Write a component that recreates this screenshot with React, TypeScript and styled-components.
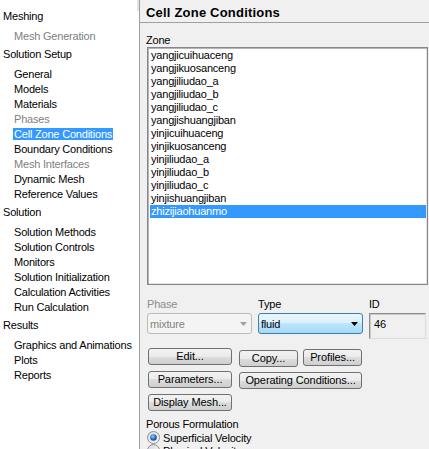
import React from "react";
import styled, { createGlobalStyle, css } from "styled-components";

const Global = createGlobalStyle`
  html, body { margin: 0; padding: 0; overflow: hidden; background: #f0f0f0; }
  * { box-sizing: border-box; }
`;

const Root = styled.div`
  display: flex;
  width: 429px;
  height: 449px;
  overflow: hidden;
  font-family: "Liberation Sans", Arial, sans-serif;
  font-size: 11px;
  letter-spacing: -0.2px;
  color: #000;
`;

const Nav = styled.nav`
  flex: none;
  width: 137px;
  background: #fff;
  padding-top: 9px;
  display: flex;
  flex-direction: column;
`;

const ScrollEdge = styled.div`
  flex: none;
  width: 2px;
  background: #fff;
  display: flex;
  flex-direction: column;
`;

const ScrollThumb = styled.div`
  height: 11px;
  background: #dfe3ee;
`;

const Group = styled.div`
  display: flex;
  flex-direction: column;
  margin-bottom: 4px;
`;

const GroupTitle = styled.div`
  height: 15px;
  line-height: 15px;
  padding-left: 3px;
  margin-bottom: 4px;
  white-space: nowrap;
`;

const NavItem = styled.div<{ $disabled?: boolean }>`
  height: 15px;
  padding-left: 13px;
  display: flex;
  align-items: center;
  white-space: nowrap;
  color: ${(p) => (p.$disabled ? "#808080" : "#000")};
`;

const NavLabel = styled.span<{ $selected?: boolean }>`
  display: inline-block;
  line-height: 12px;
  padding: 0 1px;
  ${(p) =>
    p.$selected &&
    css`
      background: #3399ff;
      color: #fff;
    `}
`;

const Panel = styled.section`
  flex: 1;
  min-width: 0;
  background: #f0f0f0;
  border-left: 1px solid #a0a0a0;
  display: flex;
  flex-direction: column;
`;

const Header = styled.h1`
  margin: 0;
  height: 23px;
  padding: 3px 0 0 6px;
  border-bottom: 1px solid #a0a0a0;
  font-size: 13px;
  line-height: 19px;
  font-weight: bold;
  letter-spacing: 0.2px;
  white-space: nowrap;
`;

const Body = styled.div`
  padding: 0 1px 0 6px;
  display: flex;
  flex-direction: column;
`;

const FieldLabel = styled.div<{ $disabled?: boolean }>`
  line-height: 13px;
  height: 13px;
  white-space: nowrap;
  color: ${(p) => (p.$disabled ? "#8d8d8d" : "#000")};
`;

const ZoneLabel = styled(FieldLabel)`
  margin-top: 10px;
  height: 14px;
  line-height: 14px;
`;

const ListBox = styled.div`
  margin-left: 1px;
  height: 238px;
  background: #fff;
  border: 1px solid #828790;
  box-shadow: inset 1px 1px 0 #b4b4b4, inset -1px -1px 0 #e3e3e3;
  padding: 1px;
  display: flex;
  flex-direction: column;
`;

const ZoneItem = styled.div<{ $selected?: boolean }>`
  height: 13px;
  line-height: 13px;
  margin-left: 1px;
  padding-left: 1px;
  white-space: nowrap;
  ${(p) =>
    p.$selected &&
    css`
      background: #3399ff;
      color: #fff;
    `}
`;

const FieldGrid = styled.div`
  display: grid;
  grid-template-columns: 105px 105px 57px;
  column-gap: 6px;
  row-gap: 2px;
  margin: 13px 0 0 1px;
  align-items: start;
`;

const Combo = styled.div<{ $disabled?: boolean }>`
  height: 21px;
  border-radius: 3px;
  border: 1px solid;
  display: flex;
  align-items: center;
  justify-content: space-between;
  padding: 0 4px 0 2px;
  ${(p) =>
    p.$disabled
      ? css`
          border-color: #b9bcbf;
          background: #f4f4f4;
          color: #838383;
        `
      : css`
          border-color: #3c7fb1;
          background: linear-gradient(#eaf6fd 0%, #d9f0fc 50%, #bee6fd 50%, #a7d9f5 100%);
          color: #000;
        `}
`;

const IdBox = styled.div`
  height: 26px;
  border: 1px solid;
  border-color: #8f8f8f #dcdcdc #dcdcdc #8f8f8f;
  box-shadow: inset 1px 1px 0 #c8c8c8;
  background: #f0f0f0;
  padding: 4px 0 0 4px;
  line-height: 13px;
`;

const ButtonArea = styled.div`
  margin: 9px 0 0 2px;
  display: flex;
  flex-direction: column;
  gap: 6px;
`;

const ButtonRow = styled.div`
  display: flex;
  align-items: flex-start;
  height: 17px;
`;

const Button = styled.button<{ $w: number; $ml?: number; $mt?: number }>`
  flex: none;
  width: ${(p) => p.$w}px;
  height: 17px;
  margin: ${(p) => p.$mt ?? 0}px 0 0 ${(p) => p.$ml ?? 0}px;
  padding: 0;
  border: 1px solid #707070;
  border-radius: 3px;
  background: linear-gradient(#f2f2f2 0%, #ebebeb 50%, #dddddd 50%, #cfcfcf 100%);
  font-family: inherit;
  font-size: 11px;
  letter-spacing: -0.1px;
  line-height: 15px;
  color: #000;
  text-align: center;
  white-space: nowrap;
`;

const SectionLabel = styled.div`
  margin-top: 7px;
  line-height: 13px;
  height: 13px;
  white-space: nowrap;
`;

const RadioRow = styled.div`
  display: flex;
  align-items: center;
  gap: 3px;
  height: 13px;
  margin-left: 1px;
  white-space: nowrap;
`;

const Arrow = ({ color }: { color: string }) => (
  <svg width="7" height="4" viewBox="0 0 7 4">
    <path d="M0 0 H7 L3.5 4 Z" fill={color} />
  </svg>
);

const Radio = ({ checked }: { checked?: boolean }) => (
  <svg width="13" height="13" viewBox="0 0 13 13">
    <defs>
      <linearGradient id={checked ? "rbg1" : "rbg0"} x1="0" y1="0" x2="1" y2="1">
        <stop offset="0" stopColor="#d6d6d6" />
        <stop offset="1" stopColor="#ffffff" />
      </linearGradient>
      <radialGradient id="rdot" cx="0.4" cy="0.35" r="0.7">
        <stop offset="0" stopColor="#8ad0ff" />
        <stop offset="0.6" stopColor="#1f6fc5" />
        <stop offset="1" stopColor="#0d3f8a" />
      </radialGradient>
    </defs>
    <circle cx="6.5" cy="6.5" r="6" fill={`url(#${checked ? "rbg1" : "rbg0"})`} stroke="#8e8f8f" />
    {checked && <circle cx="6.5" cy="6.5" r="3.3" fill="url(#rdot)" />}
  </svg>
);

type NavEntry = { label: string; disabled?: boolean; selected?: boolean };
const navGroups: { title: string; items: NavEntry[] }[] = [
  { title: "Meshing", items: [{ label: "Mesh Generation", disabled: true }] },
  {
    title: "Solution Setup",
    items: [
      { label: "General" },
      { label: "Models" },
      { label: "Materials" },
      { label: "Phases", disabled: true },
      { label: "Cell Zone Conditions", selected: true },
      { label: "Boundary Conditions" },
      { label: "Mesh Interfaces", disabled: true },
      { label: "Dynamic Mesh" },
      { label: "Reference Values" },
    ],
  },
  {
    title: "Solution",
    items: [
      { label: "Solution Methods" },
      { label: "Solution Controls" },
      { label: "Monitors" },
      { label: "Solution Initialization" },
      { label: "Calculation Activities" },
      { label: "Run Calculation" },
    ],
  },
  {
    title: "Results",
    items: [{ label: "Graphics and Animations" }, { label: "Plots" }, { label: "Reports" }],
  },
];

const zones = [
  "yangjicuihuaceng",
  "yangjikuosanceng",
  "yangjiliudao_a",
  "yangjiliudao_b",
  "yangjiliudao_c",
  "yangjishuangjiban",
  "yinjicuihuaceng",
  "yinjikuosanceng",
  "yinjiliudao_a",
  "yinjiliudao_b",
  "yinjiliudao_c",
  "yinjishuangjiban",
  "zhizijiaohuanmo",
];

export default function App() {
  return (
    <>
      <Global />
      <Root>
        <Nav>
          {navGroups.map((g) => (
            <Group key={g.title}>
              <GroupTitle>{g.title}</GroupTitle>
              {g.items.map((it) => (
                <NavItem key={it.label} $disabled={it.disabled}>
                  <NavLabel $selected={it.selected}>{it.label}</NavLabel>
                </NavItem>
              ))}
            </Group>
          ))}
        </Nav>
        <ScrollEdge>
          <ScrollThumb />
        </ScrollEdge>
        <Panel>
          <Header>Cell Zone Conditions</Header>
          <Body>
            <ZoneLabel>Zone</ZoneLabel>
            <ListBox>
              {zones.map((z) => (
                <ZoneItem key={z} $selected={z === "zhizijiaohuanmo"}>
                  {z}
                </ZoneItem>
              ))}
            </ListBox>
            <FieldGrid>
              <FieldLabel $disabled>Phase</FieldLabel>
              <FieldLabel>Type</FieldLabel>
              <FieldLabel>ID</FieldLabel>
              <Combo $disabled>
                <span>mixture</span>
                <Arrow color="#a0a0a0" />
              </Combo>
              <Combo>
                <span>fluid</span>
                <Arrow color="#000" />
              </Combo>
              <IdBox>46</IdBox>
            </FieldGrid>
            <ButtonArea>
              <ButtonRow>
                <Button $w={84}>Edit...</Button>
                <Button $w={59} $ml={7} $mt={2}>Copy...</Button>
                <Button $w={59} $ml={5} $mt={1}>Profiles...</Button>
              </ButtonRow>
              <ButtonRow>
                <Button $w={84}>Parameters...</Button>
                <Button $w={123} $ml={7} $mt={1}>Operating Conditions...</Button>
              </ButtonRow>
              <ButtonRow>
                <Button $w={84}>Display Mesh...</Button>
              </ButtonRow>
            </ButtonArea>
            <SectionLabel>Porous Formulation</SectionLabel>
            <RadioRow>
              <Radio checked />
              <span>Superficial Velocity</span>
            </RadioRow>
            <RadioRow>
              <Radio />
              <span>Physical Velocity</span>
            </RadioRow>
          </Body>
        </Panel>
      </Root>
    </>
  );
}
